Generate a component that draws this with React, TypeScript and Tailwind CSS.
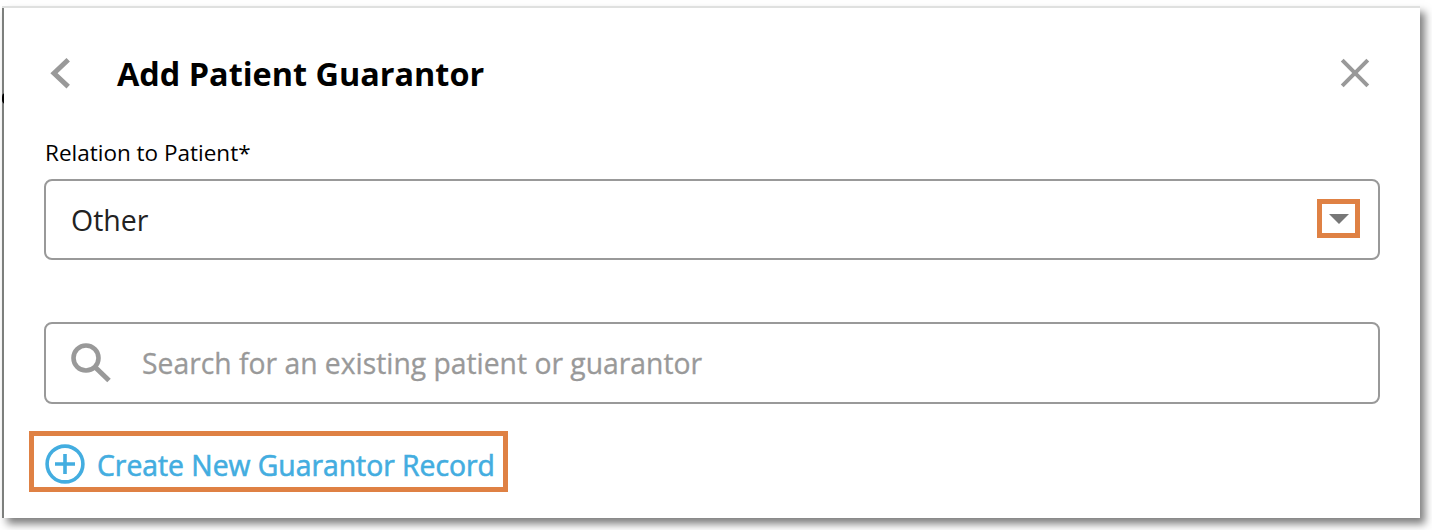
export default function App() {
  return (
    <div className="flex h-[530px] w-[1432px] overflow-hidden bg-white pt-[6px] pl-[2px] font-['Open_Sans','Noto_Sans',sans-serif]">
      <main className="relative flex h-[512px] w-[1418px] flex-col border-t-2 border-t-[#dfe0df] bg-white shadow-[5px_6px_8px_0px_rgba(0,0,0,0.5)]">
        <div className="absolute top-0 left-0 h-[510px] w-[2px] overflow-hidden bg-[#7d7f7d]">
          <div className="mt-[85px] h-[11px] w-[4px] rounded-l-full bg-black" />
        </div>

        <header className="mt-[45px] flex h-10 items-center pr-[50px] pl-[48px]">
          <button aria-label="Back" className="h-[31px] w-[20px]">
            <svg width="20" height="31" viewBox="0 0 20 31" fill="none" stroke="#999999" strokeWidth="5">
              <path d="M18.2 1.8 4 15.2 18.2 28.6" />
            </svg>
          </button>
          <h1 className="ml-[47px] flex-1 text-[32.4px] leading-10 font-bold whitespace-nowrap text-black">Add Patient Guarantor</h1>
          <button aria-label="Close" className="h-[30px] w-[30px]">
            <svg width="30" height="30" viewBox="0 0 30 30" fill="none" stroke="#999999" strokeWidth="4">
              <path d="M2.2 2.2 27.8 27.8M27.8 2.2 2.2 27.8" />
            </svg>
          </button>
        </header>

        <label className="mt-[45px] ml-[42px] self-start pl-px text-[22.5px] leading-[30px] whitespace-nowrap text-black">Relation to Patient*</label>

        <div className="mt-[11px] ml-[42px] flex h-[81px] w-[1336px] items-center justify-between rounded-[8px] border-2 border-[#999999] pr-[18px] pb-px pl-[25px]">
          <span className="pt-[2px] text-[28.5px] leading-10 text-[#222222]">Other</span>
          <div className="mb-px flex h-[39px] w-[43px] items-center justify-center border-[5px] border-[#df8144]">
            <svg width="20" height="10" viewBox="0 0 20 10">
              <path d="M0 0H20L10 10Z" fill="#777777" />
            </svg>
          </div>
        </div>

        <div className="mt-[62px] ml-[42px] flex h-[82px] w-[1336px] items-center rounded-[8px] border-2 border-[#999999] pl-[25px]">
          <svg width="40" height="40" viewBox="0 0 40 40" fill="none" stroke="#999999">
            <circle cx="15" cy="15" r="12.5" strokeWidth="4.6" />
            <path d="M24.5 24.5 38 37.5" strokeWidth="5" />
          </svg>
          <span className="ml-[31px] pb-px text-[28.3px] leading-10 whitespace-nowrap text-[#999999] [-webkit-text-stroke:0.3px_#999999]">Search for an existing patient or guarantor</span>
        </div>

        <button className="mt-[27px] ml-[27px] flex h-[61px] w-[479px] items-center border-[5px] border-[#df8144] pt-[5px] pl-[11px] text-[#43ade0]">
          <svg width="40" height="40" viewBox="0 0 40 40" fill="none" stroke="currentColor">
            <circle cx="20" cy="20" r="17.9" strokeWidth="3.6" />
            <path d="M20 10V30M10 20H30" strokeWidth="3.6" />
          </svg>
          <span className="ml-[12px] pt-[2px] text-[28.3px] leading-10 whitespace-nowrap [-webkit-text-stroke:0.6px_#43ade0]">Create New Guarantor Record</span>
        </button>
      </main>
    </div>
  );
}
